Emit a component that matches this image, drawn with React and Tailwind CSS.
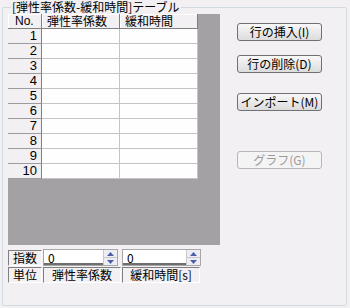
import React from 'react';

const rows = [1, 2, 3, 4, 5, 6, 7, 8, 9, 10];

function Spin({ w }) {
  return (
    <div className={`flex h-[17px] border border-[#a7a7a7] bg-white ${w}`}>
      <div className="flex-1 pl-[4px] text-[12px] leading-[15px] border-b-2 border-b-[#6e6e6e]">0</div>
      <div className="w-[14px] flex flex-col border-l border-[#c8c8c8] bg-[#eceef3]">
        <div className="flex-1 flex items-center justify-center border-b border-[#c8c8c8]">
          <svg width="7" height="4" viewBox="0 0 7 4"><path d="M0 4 L3.5 0 L7 4 Z" fill="#4d5fa8" /></svg>
        </div>
        <div className="flex-1 flex items-center justify-center">
          <svg width="7" height="4" viewBox="0 0 7 4"><path d="M0 0 L3.5 4 L7 0 Z" fill="#4d5fa8" /></svg>
        </div>
      </div>
    </div>
  );
}

function Btn({ children, disabled }) {
  return (
    <div
      className={
        disabled
          ? 'w-[85px] h-[18px] rounded-[3px] border border-[#b4b8bb] bg-[#f3f4f3] text-[#9a9a9a] text-[12px] leading-[16px] text-center'
          : 'w-[85px] h-[18px] rounded-[3px] border border-[#707070] bg-gradient-to-b from-[#f8f8f8] to-[#dcdcdc] text-black text-[12px] leading-[16px] text-center'
      }
    >
      {children}
    </div>
  );
}

export default function App() {
  const sunken = 'border border-t-[#808080] border-l-[#808080] border-r-white border-b-white';
  return (
    <div
      className="w-[350px] h-[308px] bg-[#f2f0f3] overflow-hidden text-black pt-[7px] pl-[2px]"
      style={{ fontFamily: '"Noto Sans CJK JP", "Liberation Sans", sans-serif' }}
    >
      {/* group box */}
      <div className="w-[345px] h-[299px] border border-[#d3d9e0] rounded-[2px] pl-[5px]">
        <div className="-mt-[8px] ml-[3px] w-fit px-[1px] bg-[#f2f0f3] text-[12px] leading-[14px] whitespace-nowrap">
          [弾性率係数-緩和時間]テーブル
        </div>
        <div className="flex">
          {/* grid + unit rows */}
          <div className="w-[212px] flex flex-col">
            <div className="h-[231px] bg-[#a3a1a4]">
              <div className="flex h-[15px] text-[12px] leading-[14px]">
                <div className="w-[34px] pl-[7px] bg-[#f2f0f3] border-r border-b border-[#808080] shadow-[inset_1px_1px_0_#fff]" style={{ fontFamily: '"Liberation Sans", sans-serif' }}>No.</div>
                <div className="w-[78px] pl-[5px] bg-[#f2f0f3] border-r border-b border-[#808080] shadow-[inset_1px_1px_0_#fff]">弾性率係数</div>
                <div className="w-[78px] pl-[5px] bg-[#f2f0f3] border-r border-b border-[#808080] shadow-[inset_1px_1px_0_#fff]">緩和時間</div>
              </div>
              {rows.map((n) => (
                <div key={n} className="flex h-[15px]">
                  <div
                    className="w-[34px] pr-[4px] text-right text-[13px] leading-[14px] bg-[#f2f0f3] border-r border-r-[#808080] border-b border-b-[#9c9c9c]"
                    style={{ fontFamily: '"Liberation Sans", sans-serif' }}
                  >
                    {n}
                  </div>
                  <div className="w-[78px] bg-[#fefefe] border-r border-b border-[#c4c4c4]" />
                  <div className="w-[78px] bg-[#fefefe] border-r border-b border-[#c4c4c4]" />
                </div>
              ))}
            </div>
            <div className="flex items-center mt-[4px] h-[17px]">
              <div className={`w-[34px] h-[16px] ${sunken} text-[12px] leading-[14px] text-center`}>指数</div>
              <div className="ml-[1px]"><Spin w="w-[75px]" /></div>
              <div className="ml-[4px]"><Spin w="w-[79px]" /></div>
            </div>
            <div className="flex mt-[1px] h-[16px] text-[12px] leading-[14px]">
              <div className={`w-[34px] ${sunken} text-center`}>単位</div>
              <div className={`ml-[1px] w-[78px] ${sunken} text-center`}>弾性率係数</div>
              <div className={`ml-[1px] w-[78px] ${sunken} text-center`}>緩和時間[s]</div>
            </div>
          </div>
          {/* buttons */}
          <div className="ml-[17px] flex flex-col">
            <div className="mt-[9px]"><Btn>行の挿入(I)</Btn></div>
            <div className="mt-[14px]"><Btn>行の削除(D)</Btn></div>
            <div className="mt-[20px]"><Btn>インポート(M)</Btn></div>
            <div className="mt-[40px]"><Btn disabled>グラフ(G)</Btn></div>
          </div>
        </div>
      </div>
    </div>
  );
}
